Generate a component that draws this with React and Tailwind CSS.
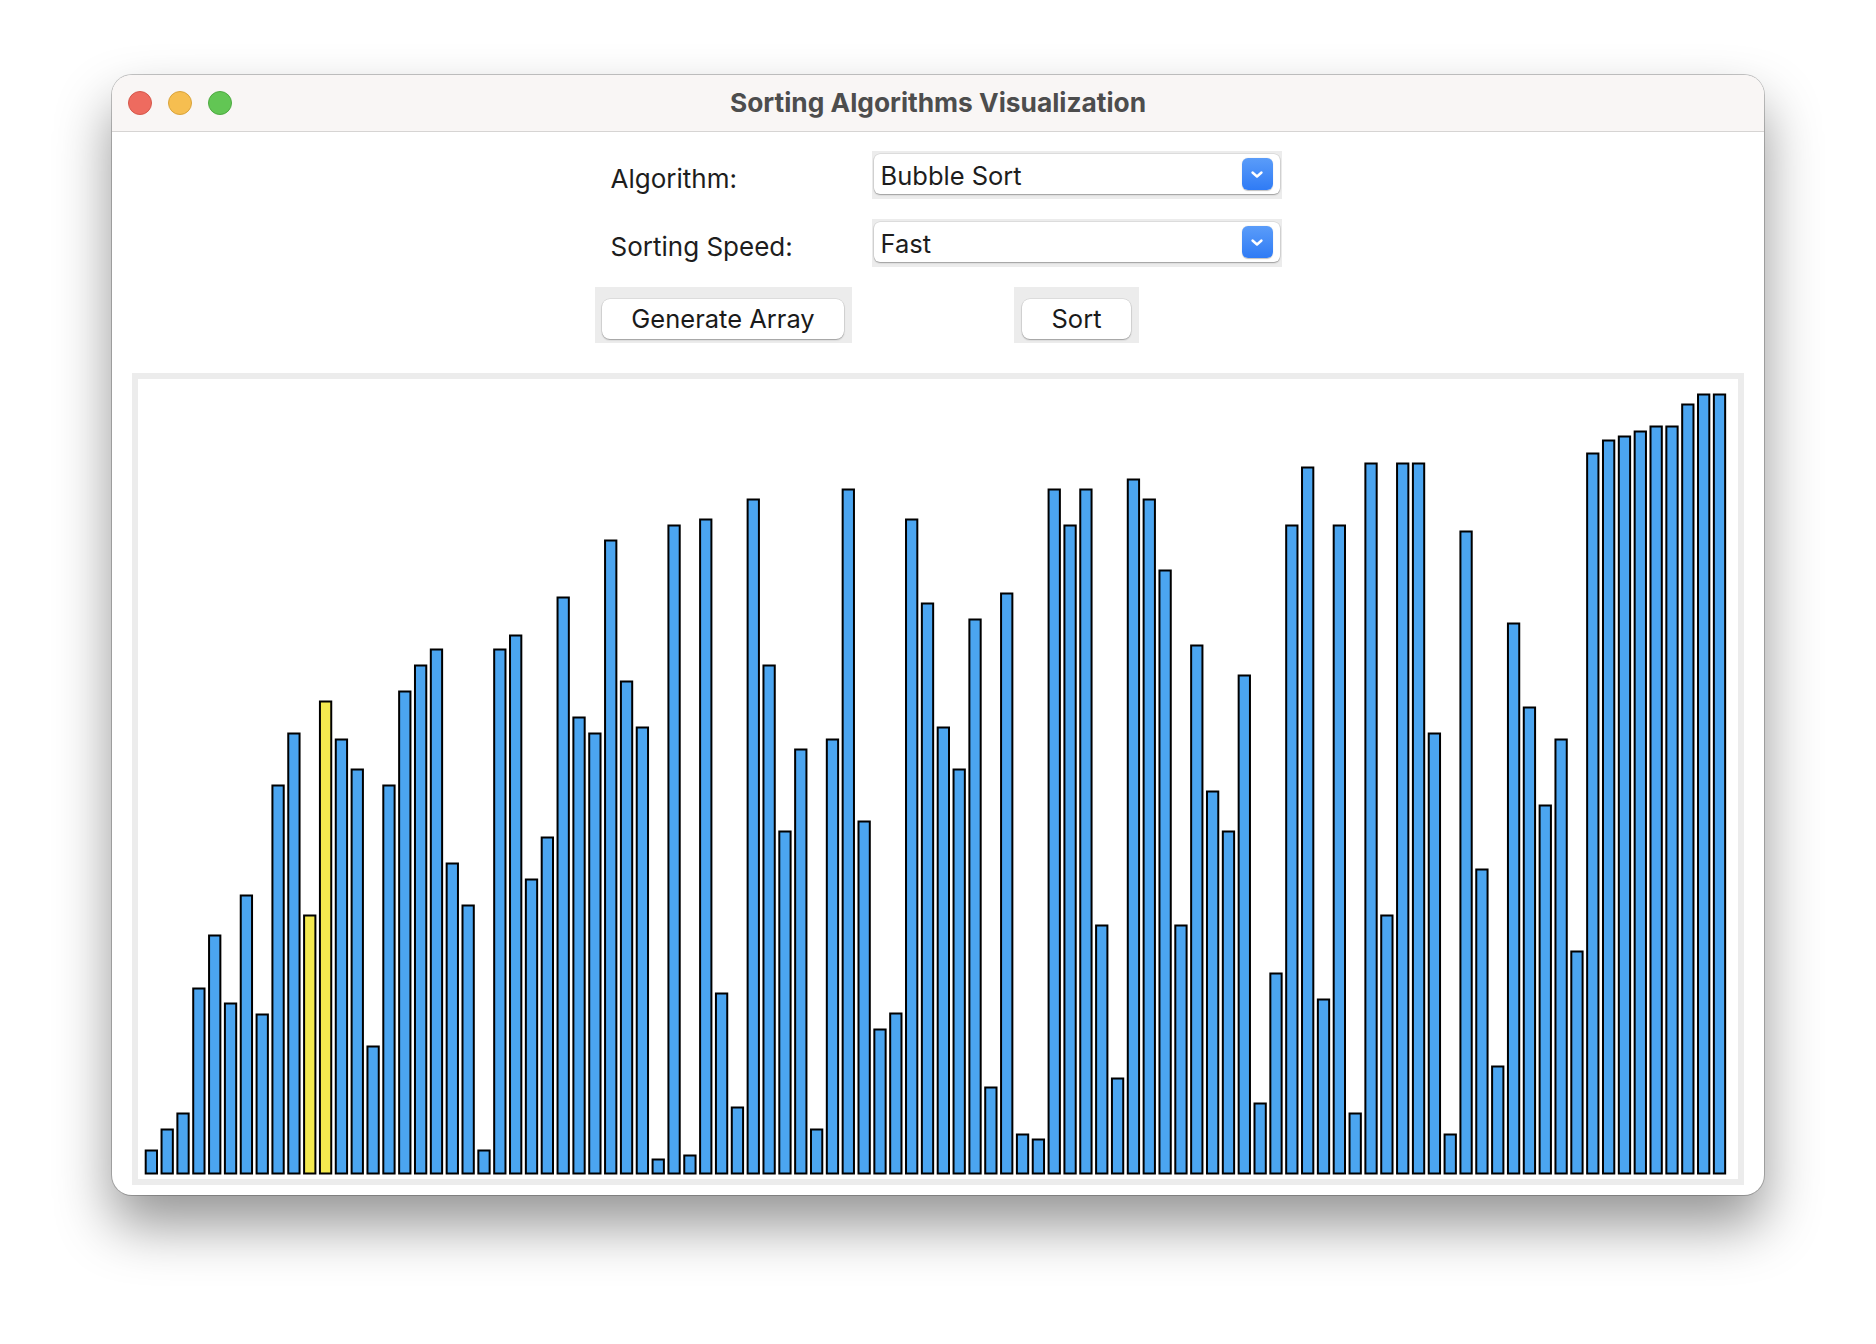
import React from "react";

const HEIGHTS = [
  25, 46, 62, 187, 240, 172, 280, 161, 390, 442,
  260, 474, 436, 406, 129, 390, 484, 510, 526, 312,
  270, 25, 526, 540, 296, 338, 578, 458, 442, 635,
  494, 448, 16, 650, 20, 656, 182, 68, 676, 510,
  344, 426, 46, 436, 686, 354, 146, 162, 656, 572,
  448, 406, 556, 88, 582, 41, 36, 686, 650, 686,
  250, 97, 696, 676, 605, 250, 530, 384, 344, 500,
  72, 202, 650, 708, 176, 650, 62, 712, 260, 712,
  712, 442, 41, 644, 306, 109, 552, 468, 370, 436,
  224, 722, 735, 739, 744, 749, 749, 771, 781, 781,
];
const HIGHLIGHT = new Set([10, 11]);

function Chevron() {
  return (
    <svg width="14" height="9" viewBox="0 0 14 9" fill="none">
      <path d="M2.5 2.5 L7 6.5 L11.5 2.5" stroke="white" strokeWidth="2.4" strokeLinecap="round" strokeLinejoin="round" />
    </svg>
  );
}

function Dropdown({ value }) {
  return (
    <div className="w-[410px] h-[48px] bg-[#ececec] px-[2px] pt-[3px] pb-[5px]">
      <div className="h-full bg-white rounded-[6px] shadow-[0_1px_1.5px_rgba(0,0,0,0.3),0_0_0_0.5px_rgba(0,0,0,0.12)] flex items-center justify-between pl-[7px] pr-[7px]">
        <span className="text-[25.5px] text-[#1d1d1d] leading-none pt-[3px]">{value}</span>
        <div className="w-[31px] h-[32px] rounded-[6px] bg-gradient-to-b from-[#5a9cf9] to-[#2f7bf5] flex items-center justify-center shadow-[0_0.5px_1px_rgba(0,0,0,0.25)]">
          <Chevron />
        </div>
      </div>
    </div>
  );
}

function Button({ label, outerW, innerW }) {
  return (
    <div className={`h-[56px] bg-[#ececec] pt-[12px] pb-[4px] flex justify-center ${outerW}`}>
      <div className={`h-full bg-white rounded-[8px] shadow-[0_1px_1.5px_rgba(0,0,0,0.3),0_0_0_0.5px_rgba(0,0,0,0.12)] flex items-center justify-center ${innerW}`}>
        <span className="text-[25.5px] text-[#1a1a1a] leading-none">{label}</span>
      </div>
    </div>
  );
}

function Chart() {
  const pitch = 15.84;
  const x0 = 6.7;
  const outerW = 13.3;
  const bottom = 795.5;
  return (
    <svg width="1600" height="800" viewBox="0 0 1600 800" className="block">
      {HEIGHTS.map((h, i) => (
        <rect
          key={i}
          x={x0 + pitch * i + 1}
          y={bottom - h + 1}
          width={outerW - 2}
          height={h - 2}
          fill={HIGHLIGHT.has(i) ? "#f4e94f" : "#4ba5f0"}
          stroke="#000"
          strokeWidth="2"
        />
      ))}
    </svg>
  );
}

export default function App() {
  return (
    <div className="w-[1876px] h-[1344px] bg-white pt-[75px] pl-[112px] font-['Inter','Noto_Sans',sans-serif]">
      <div className="w-[1652px] h-[1120px] rounded-[20px] overflow-hidden bg-white shadow-[0_30px_55px_rgba(0,0,0,0.42),0_0_0_1px_rgba(0,0,0,0.22)]">
        {/* Title bar */}
        <div className="h-[57px] bg-[#f9f6f5] border-b border-[#d6d4d3] grid grid-cols-[1fr_auto_1fr] items-center">
          <div className="flex items-center gap-[16px] pl-[16px]">
            <div className="w-[24px] h-[24px] rounded-full bg-[#ee6b5f] border border-[#d5574b]" />
            <div className="w-[24px] h-[24px] rounded-full bg-[#f6be50] border border-[#d9a33b]" />
            <div className="w-[24px] h-[24px] rounded-full bg-[#62c654] border border-[#4ea941]" />
          </div>
          <div className="text-[26.3px] font-bold text-[#4d4d4d] leading-none">Sorting Algorithms Visualization</div>
          <div />
        </div>
        {/* Content */}
        <div className="px-[20px] pt-[19px] pb-[10px]">
          <div className="w-[707px] mx-auto grid grid-cols-[277px_430px] gap-y-[20px]">
            <div className="h-[48px] flex items-center pl-[26px] pt-[7px]">
              <span className="text-[26px] text-[#1d1d1d] leading-none">Algorithm:</span>
            </div>
            <div className="flex justify-center">
              <Dropdown value="Bubble Sort" />
            </div>
            <div className="h-[48px] flex items-center pl-[26px] pt-[7px]">
              <span className="text-[26px] text-[#1d1d1d] leading-none">Sorting Speed:</span>
            </div>
            <div className="flex justify-center">
              <Dropdown value="Fast" />
            </div>
            <div className="flex justify-center">
              <Button label="Generate Array" outerW="w-[257px]" innerW="w-[242px]" />
            </div>
            <div className="flex justify-center">
              <Button label="Sort" outerW="w-[125px]" innerW="w-[109px]" />
            </div>
          </div>
          <div className="mt-[30px] w-[1612px] h-[812px] border-[6px] border-[#ececec] bg-white">
            <Chart />
          </div>
        </div>
      </div>
    </div>
  );
}
